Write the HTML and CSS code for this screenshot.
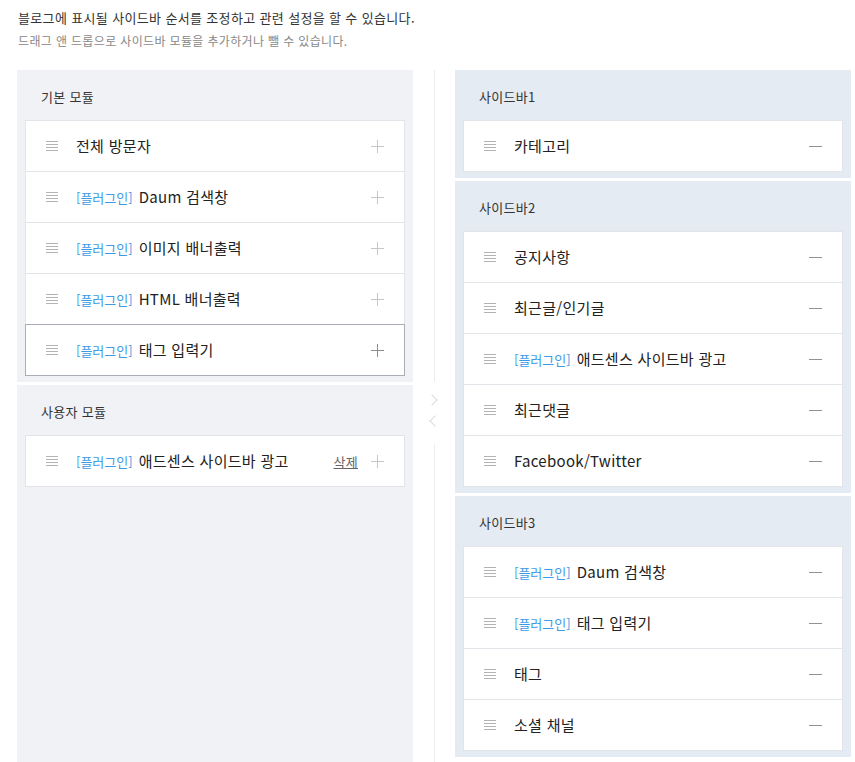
FILE: index.html
```html
<!DOCTYPE html>
<html lang="ko">
<head>
    <meta charset="UTF-8">
    <title>사이드바 설정</title>
    <link rel="stylesheet" href="styles.css">
</head>
<body>
    <div class="desc">
        <p class="desc-main">블로그에 표시될 사이드바 순서를 조정하고 관련 설정을 할 수 있습니다.</p>
        <p class="desc-sub">드래그 앤 드롭으로 사이드바 모듈을 추가하거나 뺄 수 있습니다.</p>
    </div>

    <div class="board">
        <!-- 왼쪽: 사용 가능한 모듈 -->
        <div class="col col-left">
            <div class="group">
                <h3 class="group-title">기본 모듈</h3>
                <ul class="card">
                    <li class="item"><span class="handle"></span><span class="name">전체 방문자</span><span class="add"></span></li>
                    <li class="item"><span class="handle"></span><span class="name"><em>[플러그인]</em>Daum 검색창</span><span class="add"></span></li>
                    <li class="item"><span class="handle"></span><span class="name"><em>[플러그인]</em>이미지 배너출력</span><span class="add"></span></li>
                    <li class="item"><span class="handle"></span><span class="name"><em>[플러그인]</em>HTML 배너출력</span><span class="add"></span></li>
                    <li class="item on"><span class="handle"></span><span class="name"><em>[플러그인]</em>태그 입력기</span><span class="add"></span></li>
                </ul>
            </div>
            <div class="group group-fill">
                <h3 class="group-title">사용자 모듈</h3>
                <ul class="card">
                    <li class="item"><span class="handle"></span><span class="name"><em>[플러그인]</em>애드센스 사이드바 광고</span><a href="#" class="del">삭제</a><span class="add"></span></li>
                </ul>
            </div>
        </div>

        <div class="split">
            <span class="split-line top"></span>
            <span class="arrow right"></span>
            <span class="arrow left"></span>
            <span class="split-line bottom"></span>
        </div>

        <!-- 오른쪽: 사이드바 -->
        <div class="col col-right">
            <div class="group">
                <h3 class="group-title">사이드바1</h3>
                <ul class="card">
                    <li class="item"><span class="handle"></span><span class="name">카테고리</span><span class="remove"></span></li>
                </ul>
            </div>
            <div class="group">
                <h3 class="group-title">사이드바2</h3>
                <ul class="card">
                    <li class="item"><span class="handle"></span><span class="name">공지사항</span><span class="remove"></span></li>
                    <li class="item"><span class="handle"></span><span class="name">최근글/인기글</span><span class="remove"></span></li>
                    <li class="item"><span class="handle"></span><span class="name"><em>[플러그인]</em>애드센스 사이드바 광고</span><span class="remove"></span></li>
                    <li class="item"><span class="handle"></span><span class="name">최근댓글</span><span class="remove"></span></li>
                    <li class="item"><span class="handle"></span><span class="name">Facebook/Twitter</span><span class="remove"></span></li>
                </ul>
            </div>
            <div class="group">
                <h3 class="group-title">사이드바3</h3>
                <ul class="card">
                    <li class="item"><span class="handle"></span><span class="name"><em>[플러그인]</em>Daum 검색창</span><span class="remove"></span></li>
                    <li class="item"><span class="handle"></span><span class="name"><em>[플러그인]</em>태그 입력기</span><span class="remove"></span></li>
                    <li class="item"><span class="handle"></span><span class="name">태그</span><span class="remove"></span></li>
                    <li class="item"><span class="handle"></span><span class="name">소셜 채널</span><span class="remove"></span></li>
                </ul>
            </div>
        </div>
    </div>
</body>
</html>
```

FILE: styles.css
```css
body {
    margin: 0;
    font-family: "Noto Sans CJK KR", "Noto Sans", sans-serif;
    letter-spacing: 0.3px;
    color: #222;
    background: #fff;
}
p, h3, ul {
    margin: 0;
    padding: 0;
}
ul {
    list-style: none;
}
.desc {
    padding: 9px 0 0 18px;
}
.desc-main {
    font-size: 13px;
    line-height: 18px;
    letter-spacing: 0.35px;
    color: #333;
}
.desc-sub {
    margin-top: 5px;
    font-size: 12px;
    line-height: 18px;
    letter-spacing: 0.35px;
    color: #888;
}
.board {
    display: flex;
    margin: 20px 4px 0 17px;
    min-height: 692px;
}
.col {
    width: 396px;
    display: flex;
    flex-direction: column;
    gap: 3px;
}
.col-left .group {
    background: #f0f2f6;
}
.col-right .group {
    background: #e5ebf2;
}
.group {
    padding: 0 8px 6px;
}
.group-fill {
    flex: 1;
}
.group-title {
    padding: 17px 0 0 16px;
    height: 33px;
    font-size: 13px;
    line-height: 20px;
    font-weight: normal;
    color: #333;
}
.item {
    position: relative;
    display: flex;
    align-items: center;
    height: 50px;
    padding: 0 20px;
    background: #fff;
    border: 1px solid #e1e4e9;
}
.item + .item {
    margin-top: -1px;
}
.item.on {
    z-index: 1;
    border-color: #a9adb6;
}
.handle {
    width: 12px;
    height: 10px;
    margin-right: 18px;
    background: repeating-linear-gradient(to bottom, #b3b3b3 0, #b3b3b3 1px, transparent 1px, transparent 3px);
}
.name {
    flex: 1;
    font-size: 15px;
    line-height: 20px;
    color: #222;
}
.name em {
    font-style: normal;
    font-size: 13px;
    letter-spacing: 0;
    color: #3d9be6;
    margin-right: 6px;
}
.del {
    font-size: 13px;
    color: #666;
    margin-right: 13px;
}
.add, .remove {
    position: relative;
    width: 13px;
    height: 13px;
}
.add::before, .add::after, .remove::before {
    content: "";
    position: absolute;
    background: #c6c6c6;
}
.add::before {
    left: 0;
    top: 6px;
    width: 13px;
    height: 1px;
}
.add::after {
    left: 6px;
    top: 0;
    width: 1px;
    height: 13px;
}
.item.on .add::before, .item.on .add::after {
    background: #8c8c8c;
}
.remove::before {
    left: 0;
    top: 6px;
    width: 13px;
    height: 1px;
    background: #8e939b;
}
.split {
    width: 42px;
    display: flex;
    flex-direction: column;
    align-items: center;
}
.split-line {
    width: 1px;
    background: #eceef2;
}
.split-line.top {
    height: 312px;
}
.split-line.bottom {
    flex: 1;
    margin-top: 19px;
}
.arrow {
    width: 7px;
    height: 7px;
    border-top: 1px solid #d8dbe0;
    border-right: 1px solid #d8dbe0;
}
.arrow.right {
    margin-top: 14px;
    transform: translateX(-2px) rotate(45deg);
}
.arrow.left {
    margin-top: 13px;
    transform: translateX(1px) rotate(-135deg);
}
```
